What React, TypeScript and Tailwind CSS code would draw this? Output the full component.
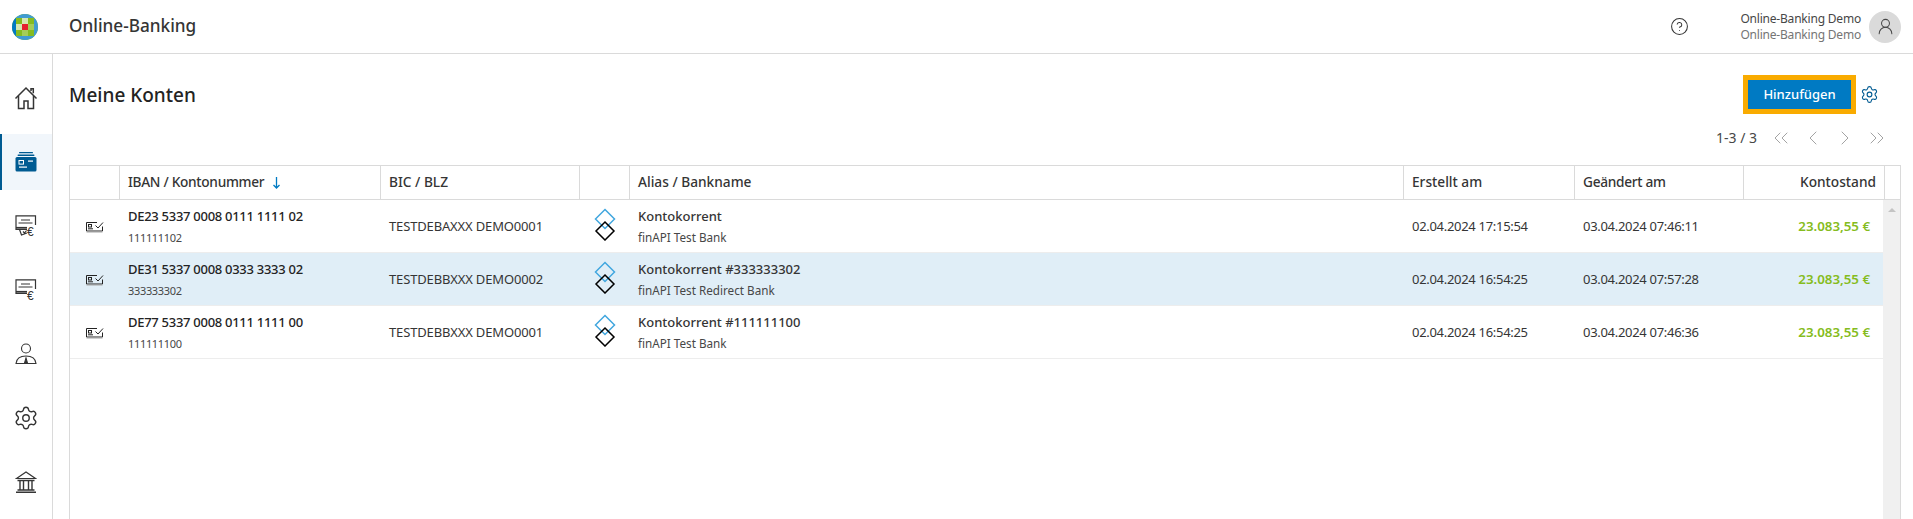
import { ChevronLeft, ChevronRight, ChevronsLeft, ChevronsRight, CircleHelp, Settings, UserRound } from "lucide-react";
import type { ReactNode } from "react";

const GRID = "grid grid-cols-[50px_261px_199px_50px_774px_171px_169px_minmax(0,1fr)]";

const ACCOUNTS = [
  { iban: "DE23 5337 0008 0111 1111 02", nr: "111111102", bic: "TESTDEBAXXX DEMO0001", alias: "Kontokorrent", bank: "finAPI Test Bank", created: "02.04.2024 17:15:54", changed: "03.04.2024 07:46:11" },
  { iban: "DE31 5337 0008 0333 3333 02", nr: "333333302", bic: "TESTDEBBXXX DEMO0002", alias: "Kontokorrent #333333302", bank: "finAPI Test Redirect Bank", created: "02.04.2024 16:54:25", changed: "03.04.2024 07:57:28", selected: true },
  { iban: "DE77 5337 0008 0111 1111 00", nr: "111111100", bic: "TESTDEBBXXX DEMO0001", alias: "Kontokorrent #111111100", bank: "finAPI Test Bank", created: "02.04.2024 16:54:25", changed: "03.04.2024 07:46:36" },
];

function Logo() {
  return (
    <svg width="26" height="26" viewBox="0 0 26 26">
      <defs>
        <clipPath id="globe"><circle cx="13" cy="13" r="13" /></clipPath>
      </defs>
      <g clipPath="url(#globe)">
        <rect width="26" height="26" fill="#85bc20" />
        <rect x="0" y="0" width="26" height="4" fill="#409bd2" />
        <rect x="0" y="22" width="26" height="4" fill="#409bd2" />
        <rect x="0" y="4" width="4" height="18" fill="#007ac3" />
        <rect x="22" y="4" width="4" height="18" fill="#409bd2" />
        <rect x="4" y="10" width="6" height="6" fill="#d4e8b1" />
        <rect x="10" y="4" width="6" height="6" fill="#d4e8b1" />
        <rect x="16" y="4" width="6" height="6" fill="#85bc20" />
        <rect x="16" y="10" width="6" height="6" fill="#a4cd58" />
        <rect x="10" y="16" width="6" height="6" fill="#a4cd58" />
        <rect x="10" y="10" width="6" height="6" fill="#e5202e" />
      </g>
    </svg>
  );
}

function HomeIcon() {
  return (
    <svg width="24" height="24" viewBox="0 0 24 24" fill="none" stroke="#353535" strokeWidth="1.500">
      <path d="M1.500 12.500 12 2l10.500 10.500" />
      <path d="M4.500 10v12.500h5.500V15h4v7.500h5.500V10" />
      <path d="M17 5V2.800h2.300v4.400" />
    </svg>
  );
}

function CardsIcon() {
  return (
    <svg width="22" height="20" viewBox="0 0 22 20" fill="#005b92">
      <rect x="4" y="0" width="14" height="1.300" rx="0.600" />
      <rect x="2.500" y="2.500" width="17" height="1.500" rx="0.700" />
      <rect x="0.500" y="5" width="21" height="14.500" rx="1.500" />
      <rect x="4" y="8.500" width="4.500" height="3.600" fill="none" stroke="#fff" strokeWidth="1" />
      <rect x="13" y="8.500" width="5" height="1.200" fill="#fff" />
      <rect x="4" y="14.500" width="8" height="1.200" fill="#fff" />
    </svg>
  );
}

function PaymentIcon({ tilted }: { tilted?: boolean }) {
  return (
    <svg width="22" height="28" viewBox="0 -3 22 28" fill="none" stroke="#353535" strokeWidth="1.200">
      <path d="M12 14.500H1V.8h19.500V10" />
      <path d="M1 12.800h11" strokeWidth="1.800" />
      <path d="M6 5h9M3.500 8h14" />
      {tilted ? <path d="M4.500 14.500l2 5.500 5.500-2M8 16.500l1.500 1.500 2-2.500" /> : null}
      <text x="12" y="21" fill="#353535" stroke="none" fontSize="12" fontFamily="Liberation Sans, sans-serif">€</text>
    </svg>
  );
}

function PersonIcon() {
  return (
    <svg width="22" height="22" viewBox="0 0 22 22" fill="none" stroke="#353535" strokeWidth="1.100">
      <circle cx="11" cy="5.500" r="4.500" />
      <path d="M1 20.500c.5-5 4-7.500 10-7.500s9.500 2.500 10 7.500Z" />
      <path d="M11 15l-1.600 5.500h3.200Z" fill="#353535" />
    </svg>
  );
}

function BankIcon() {
  return (
    <svg width="22" height="22" viewBox="0 0 22 22" fill="none" stroke="#353535" strokeWidth="1.200">
      <path d="M1.500 7.500 11 1l9.500 6.500Z" />
      <path d="M2.500 9.500h17M2.500 19h17M1 21.300h20" strokeWidth="1.500" />
      <path d="M5 10v9M8.500 10v9M13.500 10v9M17 10v9" strokeWidth="1.400" />
    </svg>
  );
}

function AccountIcon() {
  return (
    <svg width="18" height="12" viewBox="0 0 18 12" fill="none" stroke="#232323" strokeWidth="1">
      <path d="M11 1.500H.5v8.500h16V5.500" />
      <rect x="2.500" y="3.500" width="3" height="2.500" />
      <path d="M2 7.800h5" />
      <path d="M9.500 4.500l2.500 2.500 5-5.500" />
      <path d="M.5 11h16" stroke="#a3a3a3" />
    </svg>
  );
}

function DiamondsIcon() {
  return (
    <svg className="mb-1" width="22" height="33" viewBox="0 0 22 33" fill="none" strokeWidth="1.500">
      <path d="M11 1.500 20.500 11 11 20.500 1.500 11Z" stroke="#41a7df" />
      <path d="M11 14 20 23 11 32 2 23Z" stroke="#000" />
    </svg>
  );
}

function SortArrow() {
  return (
    <svg className="ml-[9px]" width="7" height="12" viewBox="0 0 7 12" fill="none" stroke="#007ac3" strokeWidth="1.300">
      <path d="M3.500 0v11M.5 8l3 3 3-3" />
    </svg>
  );
}

function NavItem({ active, children }: { active?: boolean; children: ReactNode }) {
  return (
    <div className={`flex h-14 items-center justify-center ${active ? "border-l-2 border-[#005b92] bg-[#f1f6fb] pr-0.5" : ""}`}>
      {children}
    </div>
  );
}

function HeaderCell({ children, className = "" }: { children?: ReactNode; className?: string }) {
  return (
    <div className={`flex items-center border-r border-[#dadada] px-2 text-[13.700px] font-medium text-[#353535] ${className}`}>
      {children}
    </div>
  );
}

export default function App() {
  return (
    <div className="flex h-[519px] flex-col overflow-hidden bg-white font-['Noto_Sans',sans-serif] text-[#232323]">
      <header className="flex h-[54px] shrink-0 items-center border-b border-[#dadada] pr-3">
        <div className="flex w-[69px] shrink-0 items-center pl-3">
          <Logo />
        </div>
        <span className="mb-0.5 text-[17.200px] font-medium text-[#353535]">Online-Banking</span>
        <CircleHelp className="ml-auto mr-[51px] h-[19px] w-[19px] text-[#353535]" strokeWidth={1.300} />
        <div className="mr-2 text-right text-xs leading-4 tracking-[-0.2px]">
          <div className="text-[#474747]">Online-Banking Demo</div>
          <div className="text-[#757575]">Online-Banking Demo</div>
        </div>
        <div className="flex h-8 w-8 items-center justify-center rounded-full bg-[#dadada]">
          <UserRound className="h-[19px] w-[19px] text-[#474747]" strokeWidth={1.300} />
        </div>
      </header>

      <div className="flex min-h-0 flex-1">
        <nav className="flex w-[53px] shrink-0 flex-col gap-2 border-r border-[#dadada] pt-4">
          <NavItem><HomeIcon /></NavItem>
          <NavItem active><CardsIcon /></NavItem>
          <NavItem><PaymentIcon tilted /></NavItem>
          <NavItem><PaymentIcon /></NavItem>
          <NavItem><PersonIcon /></NavItem>
          <NavItem><Settings className="h-[26px] w-[26px] text-[#353535]" strokeWidth={1.300} /></NavItem>
          <NavItem><BankIcon /></NavItem>
        </nav>

        <main className="min-w-0 flex-1 pl-4 pr-3 pt-[21px]">
          <div className="flex h-[39px] items-center">
            <h1 className="pt-px text-[19px] font-medium text-[#232323]">Meine Konten</h1>
            <button type="button" className="ml-auto h-[39px] w-[113px] border-[5px] border-[#f9ab00] bg-[#007ac3] text-[13px] font-medium text-white">
              Hinzufügen
            </button>
            <Settings className="ml-1 mr-[22px] h-[19px] w-[19px] text-[#005b92]" strokeWidth={1.400} />
          </div>

          <div className="mb-3 mt-[9px] flex h-[30px] items-center justify-end gap-2 pr-3 text-[#a3a3a3]">
            <span className="mr-1 text-sm text-[#474747]">1-3 / 3</span>
            <ChevronsLeft className="h-6 w-6" strokeWidth={1} />
            <ChevronLeft className="h-6 w-6" strokeWidth={1} />
            <ChevronRight className="h-6 w-6" strokeWidth={1} />
            <ChevronsRight className="h-6 w-6" strokeWidth={1} />
          </div>

          <div className="h-[400px] border border-[#dadada]">
            <div className="h-[34px] border-b border-[#dadada]">
              <div className={`${GRID} h-full w-[1815px]`}>
                <HeaderCell />
                <HeaderCell>
                  <span className="tracking-[-0.3px]">IBAN / Kontonummer</span>
                  <SortArrow />
                </HeaderCell>
                <HeaderCell>BIC / BLZ</HeaderCell>
                <HeaderCell />
                <HeaderCell>Alias / Bankname</HeaderCell>
                <HeaderCell>Erstellt am</HeaderCell>
                <HeaderCell><span className="tracking-[-0.3px]">Geändert am</span></HeaderCell>
                <HeaderCell className="justify-end">Kontostand</HeaderCell>
              </div>
            </div>

            <div className="flex h-[365px]">
              <div className="min-w-0 flex-1">
                {ACCOUNTS.map((a) => (
                  <div key={a.iban} className={`${GRID} h-[53px] border-b border-[#ededed] pt-px text-[13px] ${a.selected ? "bg-[#e0eef7]" : ""}`}>
                    <div className="flex items-center justify-center"><AccountIcon /></div>
                    <div className="flex flex-col justify-center px-2">
                      <span className="text-[13px] font-medium leading-[21px] tracking-[-0.28px]">{a.iban}</span>
                      <span className="text-[11px] leading-[21px] tracking-[-0.33px] text-[#474747]">{a.nr}</span>
                    </div>
                    <div className="flex items-center px-2 tracking-[-0.15px] text-[#353535]">{a.bic}</div>
                    <div className="flex items-center justify-center"><DiamondsIcon /></div>
                    <div className="flex flex-col justify-center px-2">
                      <span className="text-[13px] font-medium leading-[21px] text-[#353535]">{a.alias}</span>
                      <span className="text-[11.700px] leading-[21px] text-[#474747]">{a.bank}</span>
                    </div>
                    <div className="flex items-center px-2 tracking-[-0.3px] text-[#353535]">{a.created}</div>
                    <div className="flex items-center px-2 tracking-[-0.3px] text-[#353535]">{a.changed}</div>
                    <div className="flex items-center justify-end pr-[13px] text-[13.300px] font-semibold text-[#85bc20]">23.083,55 €</div>
                  </div>
                ))}
              </div>
              <div className="flex w-[17px] shrink-0 justify-center bg-[#f0f0f0] pt-2">
                <div className="h-0 w-0 border-x-4 border-b-4 border-x-transparent border-b-[#c4c4c4]" />
              </div>
            </div>
          </div>
        </main>
      </div>
    </div>
  );
}
